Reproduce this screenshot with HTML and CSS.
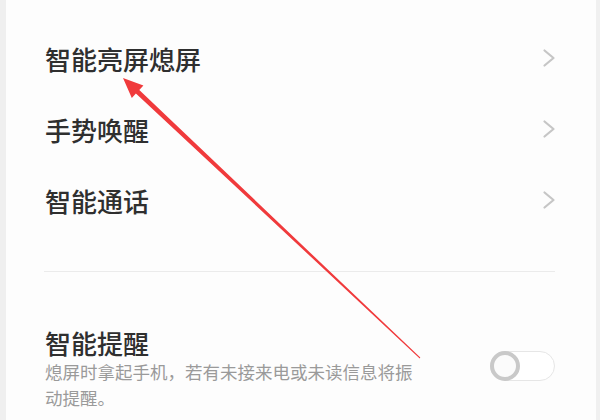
FILE: index.html
```html
<!DOCTYPE html>
<html lang="zh-CN">
<head>
<meta charset="utf-8">
<title>设置</title>
<link rel="stylesheet" href="styles.css">
</head>
<body>
<div class="screen">
  <ul class="list">
    <li class="row"><span class="label">智能亮屏熄屏</span><svg class="chev" viewBox="0 0 14 20" width="14" height="20"><polyline points="2.5,2.5 11.5,10 2.5,17.5"/></svg></li>
    <li class="row"><span class="label">手势唤醒</span><svg class="chev" viewBox="0 0 14 20" width="14" height="20"><polyline points="2.5,2.5 11.5,10 2.5,17.5"/></svg></li>
    <li class="row"><span class="label">智能通话</span><svg class="chev" viewBox="0 0 14 20" width="14" height="20"><polyline points="2.5,2.5 11.5,10 2.5,17.5"/></svg></li>
  </ul>
  <div class="divider"></div>
  <div class="switch-row">
    <div class="texts">
      <div class="title">智能提醒</div>
      <div class="desc">熄屏时拿起手机，若有未接来电或未读信息将振动提醒。</div>
    </div>
    <div class="toggle"><span class="knob"></span></div>
  </div>
  <svg class="annotation" viewBox="0 0 600 420" width="600" height="420">
    <polygon class="arrow" points="123,78 143.4,85.5 139.3,89.9 420.3,357.6 419.7,358.4 135.9,93.5 131.8,97.9"/>
  </svg>
</div>
</body>
</html>
```

FILE: styles.css
```css
html, body {
  margin: 0;
  padding: 0;
}
body {
  width: 600px;
  height: 420px;
  overflow: hidden;
  background: #fdfdfd;
  font-family: "Noto Sans CJK SC", "Noto Sans", sans-serif;
}
.screen {
  position: relative;
  width: 600px;
  height: 420px;
  box-sizing: border-box;
  border-left: 6px solid #efefef;
  border-right: 4px solid #f0f0f0;
  background: #fdfdfd;
  padding-top: 23px;
}
.list {
  list-style: none;
  margin: 0;
  padding: 0 40px 0 39px;
}
.row {
  height: 71px;
  display: flex;
  align-items: center;
  justify-content: space-between;
}
.label {
  font-size: 26px;
  font-weight: 500;
  color: #2f2f2f;
  line-height: 34px;
}
.chev {
  fill: none;
  stroke: #c6c6c6;
  stroke-width: 2.2;
  stroke-linecap: round;
  stroke-linejoin: round;
  margin-top: -1px;
}
.divider {
  height: 1px;
  background: #ebebeb;
  margin: 35px 41px 0 38px;
}
.switch-row {
  display: flex;
  justify-content: space-between;
  align-items: flex-start;
  padding: 0 41px 0 39px;
  margin-top: 55px;
}
.title {
  font-size: 26px;
  font-weight: 500;
  line-height: 32px;
  color: #2f2f2f;
}
.desc {
  width: 375px;
  font-size: 17.5px;
  line-height: 26px;
  color: #9a9a9a;
}
.toggle {
  position: relative;
  width: 65px;
  height: 30px;
  box-sizing: border-box;
  border: 1.5px solid #e6e6e6;
  border-radius: 15px;
  background: #ffffff;
  margin-top: 24px;
}
.knob {
  position: absolute;
  left: -1.5px;
  top: -1.5px;
  width: 30px;
  height: 30px;
  box-sizing: border-box;
  border: 4px solid #c9c9c9;
  border-radius: 50%;
  background: #fbfbfb;
}
.annotation {
  position: absolute;
  left: -6px;
  top: 0;
  pointer-events: none;
}
.arrow {
  fill: #f03a3c;
}
```
